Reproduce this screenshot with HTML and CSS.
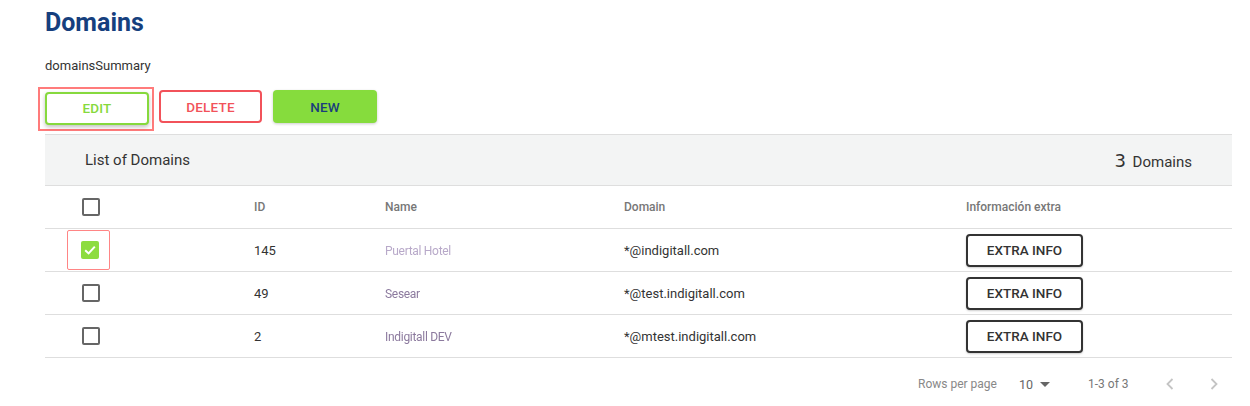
FILE: index.html
```html
<!DOCTYPE html>
<html>
<head>
<meta charset="utf-8">
<link rel="stylesheet" href="styles.css">
</head>
<body>
<div class="page">
  <h1 class="title">Domains</h1>
  <p class="summary">domainsSummary</p>
  <div class="actions">
    <div class="focus-ring"><button class="btn btn-edit">EDIT</button></div>
    <button class="btn btn-delete">DELETE</button>
    <button class="btn btn-new">NEW</button>
  </div>
  <div class="card">
    <div class="card-head">
      <span class="card-title">List of Domains</span>
      <span class="card-count"><span class="count-num">3</span> Domains</span>
    </div>
    <div class="row head-row">
      <div class="cell cb-cell"><span class="cb"></span></div>
      <div class="cell">ID</div>
      <div class="cell">Name</div>
      <div class="cell">Domain</div>
      <div class="cell">Información extra</div>
    </div>
    <div class="row">
      <div class="cell cb-cell"><span class="cb-ring"><span class="cb cb-on"><svg viewBox="0 0 18 18" width="18" height="18"><path d="M4.2 9.2 L7.6 12.4 L13.8 5.6" fill="none" stroke="#fff" stroke-width="2"/></svg></span></span></div>
      <div class="cell">145</div>
      <div class="cell"><span class="blur">Puertal Hotel</span></div>
      <div class="cell">*@indigitall.com</div>
      <div class="cell"><button class="btn-extra">EXTRA INFO</button></div>
    </div>
    <div class="row">
      <div class="cell cb-cell"><span class="cb"></span></div>
      <div class="cell">49</div>
      <div class="cell"><span class="blur dark">Sesear</span></div>
      <div class="cell">*@test.indigitall.com</div>
      <div class="cell"><button class="btn-extra">EXTRA INFO</button></div>
    </div>
    <div class="row">
      <div class="cell cb-cell"><span class="cb"></span></div>
      <div class="cell">2</div>
      <div class="cell"><span class="blur dark">Indigitall DEV</span></div>
      <div class="cell">*@mtest.indigitall.com</div>
      <div class="cell"><button class="btn-extra">EXTRA INFO</button></div>
    </div>
    <div class="pager">
      <span class="pager-label">Rows per page</span>
      <span class="pager-select">10 <span class="caret"></span></span>
      <span class="pager-range">1-3 of 3</span>
      <svg class="pager-arrow" viewBox="0 0 12 16" width="12" height="16"><path d="M8.5 3 L3.5 8 L8.5 13" fill="none" stroke="#c4c4c4" stroke-width="1.8"/></svg>
      <svg class="pager-arrow last" viewBox="0 0 12 16" width="12" height="16"><path d="M3.5 3 L8.5 8 L3.5 13" fill="none" stroke="#c4c4c4" stroke-width="1.8"/></svg>
    </div>
  </div>
</div>
</body>
</html>
```

FILE: styles.css
```css
* { box-sizing: border-box; }
body {
  margin: 0;
  background: #fff;
  font-family: Roboto, "Liberation Sans", Arial, sans-serif;
  color: #333;
}
.page {
  padding: 8px 18px 0 45px;
}
.title {
  margin: 0;
  font-size: 25px;
  line-height: 30px;
  font-weight: 700;
  color: #163f7e;
}
.summary {
  margin: 20px 0 0;
  font-size: 13px;
  line-height: 16px;
  color: #333;
}
.actions {
  display: flex;
  align-items: center;
  margin-top: 15px;
  height: 34px;
}
.focus-ring {
  margin-left: -7px;
  border: 2px solid #ff7b7b;
  padding: 3px 3px 4px 5px;
  margin-top: 5px;
}
.btn {
  height: 33px;
  width: 104px;
  border-radius: 4px;
  font-family: Roboto, "Liberation Sans", Arial, sans-serif;
  font-size: 13.5px;
  font-weight: 500;
  letter-spacing: 0.2px;
  background: #fff;
  cursor: pointer;
}
.btn-edit {
  display: block;
  border: 2px solid #86d93d;
  color: #86d93d;
  box-shadow: 0 2px 4px rgba(0,0,0,0.25);
}
.btn-delete {
  margin-left: 5px;
  margin-top: 1px;
  border: 2px solid #f2525a;
  color: #f2525a;
  width: 103px;
}
.btn-new {
  margin-left: 11px;
  margin-top: 1px;
  border: none;
  background: #86dc3d;
  color: #1a3e7c;
  box-shadow: 0 1px 3px rgba(0,0,0,0.2);
}
.card {
  margin-top: 11px;
}
.card-head {
  display: flex;
  justify-content: space-between;
  align-items: center;
  height: 52px;
  background: #f3f4f4;
  border-top: 1px solid #dedede;
  border-bottom: 1px solid #dedede;
  padding: 0 40px;
}
.card-title {
  font-size: 15px;
  color: #333;
}
.card-count {
  font-size: 15px;
  color: #333;
}
.count-num {
  font-family: "DejaVu Sans", sans-serif;
  font-size: 18px;
  margin-right: 3px;
}
.row {
  display: grid;
  grid-template-columns: 209px 131px 239px 342px 1fr;
  height: 43px;
  align-items: center;
  border-bottom: 1px solid #dedede;
  font-size: 13px;
  color: #333;
}
.head-row {
  height: 43px;
  font-size: 12px;
  color: #777;
  font-weight: 500;
}
.cb-cell {
  padding-left: 37px;
  display: flex;
  align-items: center;
}
.cb {
  display: block;
  width: 18px;
  height: 18px;
  border: 2px solid #666;
  border-radius: 2px;
}
.cb-on {
  border: none;
  background: #8ddc3f;
}
.cb-on svg { display: block; }
.cb-ring {
  display: block;
  margin-left: -15px;
  padding: 10px 10px 10px 13px;
  border: 1px solid #ff8585;
  border-radius: 2px;
}
.blur {
  color: #b8a9c9;
  filter: blur(0.7px);
  letter-spacing: -0.3px;
  font-size: 12px;
}
.blur.dark { color: #8c7a9e; }
.btn-extra {
  width: 117px;
  height: 33px;
  border: 2px solid #333;
  border-radius: 4px;
  background: #fff;
  font-family: Roboto, "Liberation Sans", Arial, sans-serif;
  font-size: 13.5px;
  font-weight: 500;
  color: #333;
  box-shadow: 0 1px 2px rgba(0,0,0,0.2);
}
.pager {
  display: flex;
  align-items: center;
  height: 52px;
  padding-left: 873px;
  font-size: 12px;
  color: #888;
}
.pager-label { width: 101px; flex: none; }
.pager-select {
  display: flex;
  align-items: center;
  color: #666;
  font-size: 12.5px;
  width: 69px;
  flex: none;
}
.caret {
  margin-left: 7px;
  width: 0;
  height: 0;
  border-left: 5px solid transparent;
  border-right: 5px solid transparent;
  border-top: 5px solid #666;
}
.pager-range { width: 76px; color: #777; flex: none; }
.pager-arrow { margin-right: 32px; flex: none; }
.pager-arrow.last { margin-right: 0; }
```
